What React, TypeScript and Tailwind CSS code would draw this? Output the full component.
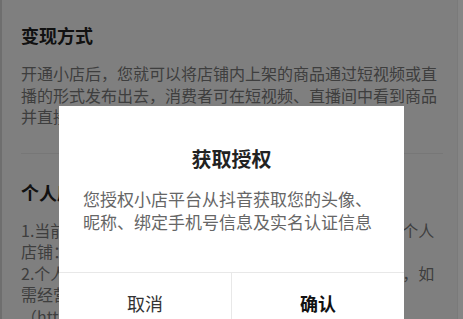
import React from 'react';

const font = 'font-["Noto_Sans_CJK_SC","Noto_Sans",sans-serif]';

// Page behind the modal: two sections of shop intro copy
const Section = ({ title, lines }: { title: string; lines: string[] }) => (
  <div className="flex flex-col">
    <h2 className="text-[18px] leading-[24px] font-bold text-[#222]">{title}</h2>
    <div className="mt-[16px] flex flex-col text-[16px] leading-[21.5px] text-[#7c7c7c]">
      {lines.map((l, i) => (
        <p key={i} className="whitespace-nowrap">
          {l}
        </p>
      ))}
    </div>
  </div>
);

export default function App() {
  return (
    <div className={`relative w-[463px] h-[319px] overflow-hidden bg-white ${font}`}>
      <div className="flex flex-col pt-[23px] pl-[21px] pr-[20px]">
        <Section
          title="变现方式"
          lines={[
            '开通小店后，您就可以将店铺内上架的商品通过短视频或直',
            '播的形式发布出去，消费者可在短视频、直播间中看到商品',
            '并直接下单购买，您即可获得相应的收益。',
          ]}
        />
        <div className="mt-[25px] mb-[26px] h-px bg-[#eeeeee]" />
        <Section
          title="个人店铺说明"
          lines={[
            '1.当前抖音账号仅支持开通一个抖音小店，若您需开通个人',
            '店铺：请使用个人身份证进行实名认证。',
            '2.个人店铺仅支持个人身份开店入驻，不支持企业资质，如',
            '需经营企业店铺，请前往电脑端',
            '（https://fxg.jinritemai.com）进行企业入驻',
          ]}
        />
      </div>

      {/* screen edge */}
      <div className="absolute left-0 top-0 bottom-0 w-[2px] bg-[#dcdcdc]" />

      {/* mask + auth dialog */}
      <div className="absolute inset-0 bg-black/50 flex justify-center pt-[106px]">
        <div className="w-[345px] h-[260px] bg-white flex flex-col">
          <h3 className="pt-[39px] text-center text-[20px] leading-[28px] font-bold text-[#222]">获取授权</h3>
          <p className="mt-[14px] px-[24px] text-[17px] leading-[23px] text-[#666]">
            您授权小店平台从抖音获取您的头像、
            <br />
            昵称、绑定手机号信息及实名认证信息
          </p>
          <div className="mt-[39px] flex border-t border-[#e8e8e8]">
            <button className="flex-1 h-[60px] text-[18px] text-[#333]">取消</button>
            <div className="w-px bg-[#e8e8e8]" />
            <button className="flex-1 h-[60px] text-[18px] font-bold text-[#111]">确认</button>
          </div>
        </div>
      </div>
      <div className="absolute right-0 top-0 bottom-0 w-[6px] bg-[#858585] border-l border-[#7a7a7a]" />
    </div>
  );
}
